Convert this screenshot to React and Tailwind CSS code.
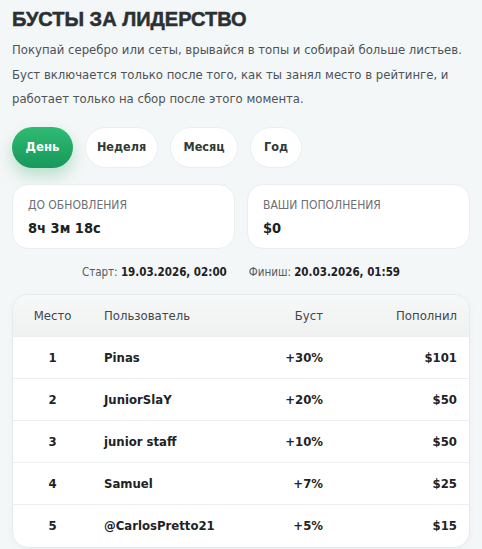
// Бусты за лидерство — leaderboard boosts panel
const tabs = [
  { label: "День", w: "w-[61px]" },
  { label: "Неделя", w: "w-[73px]" },
  { label: "Месяц", w: "w-[68px]" },
  { label: "Год", w: "w-[52px]" },
];

const rows = [
  { place: 1, user: "Pinas", boost: "+30%", paid: "$101" },
  { place: 2, user: "JuniorSlaY", boost: "+20%", paid: "$50" },
  { place: 3, user: "junior staff", boost: "+10%", paid: "$50" },
  { place: 4, user: "Samuel", boost: "+7%", paid: "$25" },
  { place: 5, user: "@CarlosPretto21", boost: "+5%", paid: "$15" },
];

const narrow = {
  fontFamily: '"DejaVu Sans Condensed", "DejaVu Sans", sans-serif',
  fontStretch: "condensed",
};
const heavy = { fontFamily: '"Liberation Sans", Roboto, sans-serif' };

const App = () => {
  const active = "День";

  return (
    <div
      className="min-h-[549px] w-[482px] bg-[#f4f7f7] px-3 pt-[6px] text-[#23282b]"
      style={narrow}
    >
      {/* Header */}
      <h1
        className="text-[20px] font-black leading-[26px] text-[#2b3033] [-webkit-text-stroke:0.5px_#2b3033]"
        style={heavy}
      >
        БУСТЫ ЗА ЛИДЕРСТВО
      </h1>
      <p className="mt-[6px] text-[13px] leading-[24.5px] text-[#4d5357]">
        Покупай серебро или сеты, врывайся в топы и собирай больше листьев.
        Буст включается только после того, как ты занял место в рейтинге, и
        работает только на сбор после этого момента.
      </p>

      {/* Period tabs */}
      <div className="mt-[15px] flex gap-3">
        {tabs.map((t) =>
          t.label === active ? (
            <button
              key={t.label}
              className={`${t.w} h-[41px] rounded-full bg-gradient-to-b from-[#2fbb73] to-[#16985a] text-[13px] font-bold text-white shadow-[0_8px_16px_rgba(30,160,90,0.28)]`}
            >
              {t.label}
            </button>
          ) : (
            <button
              key={t.label}
              className={`${t.w} h-[41px] rounded-full border border-[#e9eeee] bg-white text-[12.5px] font-bold text-[#2f3a36]`}
            >
              {t.label}
            </button>
          ),
        )}
      </div>

      {/* Stats cards */}
      <div className="mt-[16px] grid grid-cols-2 gap-3">
        <div className="h-[65px] rounded-2xl border border-[#e9eeee] bg-white px-[15px] pt-[12px]">
          <p className="text-[12px] uppercase leading-[16px] text-[#6a7075]">
            До обновления
          </p>
          <p className="mt-[5px] text-[14.5px] font-bold leading-[20px] text-[#1d2124]">
            8ч 3м 18с
          </p>
        </div>
        <div className="h-[65px] rounded-2xl border border-[#e9eeee] bg-white px-[15px] pt-[12px]">
          <p className="text-[12px] uppercase leading-[16px] text-[#6a7075]">
            Ваши пополнения
          </p>
          <p className="mt-[5px] text-[14.5px] font-bold leading-[20px] text-[#1d2124]">
            $0
          </p>
        </div>
      </div>

      {/* Period range */}
      <div className="mt-[14px] flex justify-center gap-[22px] text-[11.5px] leading-[18px] text-[#555b5f]">
        <span>
          Старт: <b className="font-bold text-[#1d2124]">19.03.2026, 02:00</b>
        </span>
        <span>
          Финиш: <b className="font-bold text-[#1d2124]">20.03.2026, 01:59</b>
        </span>
      </div>

      {/* Leaderboard */}
      <div className="mt-[13px] overflow-hidden rounded-2xl border border-[#e6eaea] bg-white shadow-[0_2px_8px_rgba(0,0,0,0.03)]">
        <table className="w-full border-collapse text-[13px]">
          <thead>
            <tr className="h-[42px] bg-gradient-to-b from-[#f7f8f8] to-[#eff1f1] text-[#41474b]">
              <th className="w-[79px] text-center font-normal">Место</th>
              <th className="pl-[12px] text-left font-normal">Пользователь</th>
              <th className="w-[100px] text-right font-normal">Буст</th>
              <th className="w-[146px] pr-[12px] text-right font-normal">
                Пополнил
              </th>
            </tr>
          </thead>
          <tbody>
            {rows.map((r) => (
              <tr
                key={r.place}
                className="h-[42px] border-t border-[#eceff0] font-bold text-[#1f2326]"
              >
                <td className="text-center">{r.place}</td>
                <td className="pl-[12px]">{r.user}</td>
                <td className="text-right">{r.boost}</td>
                <td className="pr-[12px] text-right">{r.paid}</td>
              </tr>
            ))}
          </tbody>
        </table>
      </div>
    </div>
  );
};

export default App;
